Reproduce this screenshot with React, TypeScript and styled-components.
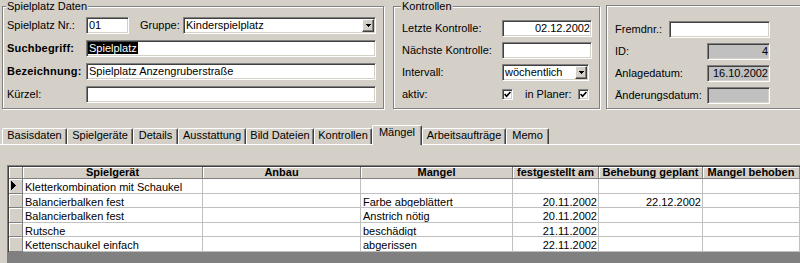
import React from 'react';
import styled, { createGlobalStyle, css } from 'styled-components';

const GlobalStyle = createGlobalStyle`
  html, body { margin: 0; padding: 0; background: #d4d0c8; }
  body {
    font-family: "Liberation Sans", Arial, sans-serif;
    font-size: 11px;
    color: #000;
  }
`;

const Screen = styled.div`
  width: 800px;
  height: 263px;
  overflow: hidden;
  background: #d4d0c8;
  display: flex;
  flex-direction: column;
`;

const TopArea = styled.div`
  display: flex;
  align-items: flex-start;
  padding-left: 2px;
  height: 110px;
  flex: none;
`;

const Group = styled.fieldset<{
  $width: number;
  $gapLeft?: number;
  $padTop: number;
  $padLeft: number;
  $padRight: number;
  $plain?: boolean;
}>`
  box-sizing: border-box;
  flex: none;
  min-width: 0;
  width: ${(p) => p.$width}px;
  height: ${(p) => (p.$plain ? 104 : 109)}px;
  margin: ${(p) => (p.$plain ? 5 : 0)}px 0 0 ${(p) => p.$gapLeft ?? 0}px;
  padding: ${(p) => p.$padTop}px ${(p) => p.$padRight}px 0 ${(p) => p.$padLeft}px;
  border: 1px solid #808080;
  box-shadow: inset 1px 1px 0 #fff, 1px 1px 0 #fff;
`;

const Legend = styled.legend`
  font-size: 11px;
  line-height: 13px;
  padding: 0 1px;
  margin-left: -1px;
  background: #d4d0c8;
`;

const FieldStack = styled.div<{ $gap: number }>`
  display: flex;
  flex-direction: column;
  gap: ${(p) => p.$gap}px;
`;

const FieldRow = styled.div`
  display: flex;
  align-items: center;
  height: 17px;
`;

const Label = styled.span<{ $width?: number; $bold?: boolean; $gapLeft?: number }>`
  flex: none;
  width: ${(p) => (p.$width ? `${p.$width}px` : 'auto')};
  margin-left: ${(p) => p.$gapLeft ?? 0}px;
  line-height: 17px;
  font-weight: ${(p) => (p.$bold ? 700 : 400)};
  letter-spacing: ${(p) => (p.$bold ? '0.2px' : '0')};
  white-space: nowrap;
`;

const sunken = css`
  box-sizing: border-box;
  border: 1px solid;
  border-color: #808080 #fff #fff #808080;
  box-shadow: inset 1px 1px 0 #404040, inset -1px -1px 0 #d4d0c8;
`;

const TextBox = styled.div<{ $width?: number; $align?: 'left' | 'right'; $readOnly?: boolean }>`
  ${sunken}
  flex: ${(p) => (p.$width ? 'none' : '1')};
  width: ${(p) => (p.$width ? `${p.$width}px` : 'auto')};
  height: 17px;
  padding: 1px 1px 1px 2px;
  line-height: 13px;
  text-align: ${(p) => p.$align ?? 'left'};
  background: ${(p) => (p.$readOnly ? '#c0c0c0' : '#fff')};
  white-space: nowrap;
  overflow: hidden;
`;

const Selected = styled.span`
  background: #000;
  color: #fff;
  margin-left: -1px;
  padding: 0 1px;
`;

const ComboBox = styled.div<{ $width: number; $gapLeft?: string }>`
  ${sunken}
  flex: none;
  display: flex;
  width: ${(p) => p.$width}px;
  margin-left: ${(p) => p.$gapLeft ?? '0'};
  height: 17px;
  padding: 1px;
  background: #fff;
`;

const ComboText = styled.span`
  flex: 1;
  padding-left: 1px;
  line-height: 13px;
  white-space: nowrap;
  overflow: hidden;
`;

const DropButton = styled.span`
  flex: none;
  box-sizing: border-box;
  width: 12px;
  height: 13px;
  background: #d4d0c8;
  border: 1px solid;
  border-color: #fff #404040 #404040 #fff;
  box-shadow: inset -1px -1px 0 #808080;
  display: flex;
  align-items: center;
  justify-content: center;
`;

const CheckBox = styled.span`
  ${sunken}
  flex: none;
  width: 11px;
  height: 11px;
  background: #fff;
  display: flex;
  align-items: center;
  justify-content: center;
`;

const TabStrip = styled.div`
  display: flex;
  align-items: flex-end;
  height: 19px;
  margin-top: 15px;
  padding-left: 2px;
  flex: none;
`;

const Tab = styled.div<{ $width: number; $active?: boolean }>`
  box-sizing: border-box;
  flex: none;
  position: relative;
  z-index: ${(p) => (p.$active ? 2 : 1)};
  width: ${(p) => p.$width}px;
  height: ${(p) => (p.$active ? 20 : 16)}px;
  margin-bottom: ${(p) => (p.$active ? -1 : 0)}px;
  border: 1px solid;
  border-bottom: none;
  border-color: #fff #404040 transparent #fff;
  border-radius: 2px 2px 0 0;
  box-shadow: inset -1px 0 0 #808080;
  background: #d4d0c8;
  line-height: 13px;
  text-align: center;
  white-space: nowrap;
`;

const TabPanel = styled.div`
  flex: 1;
  display: flex;
  flex-direction: column;
  border-top: 1px solid #fff;
  padding: 20px 0 0 7px;
  min-height: 0;
`;

const SheetFrame = styled.div`
  flex: 1;
  background: #808080;
  padding: 1px 0 0 1px;
`;

const Sheet = styled.div<{ $columns: string }>`
  display: grid;
  grid-template-columns: ${(p) => p.$columns};
  grid-template-rows: 12px;
  grid-auto-rows: 14.6px;
  border-top: 1px solid #404040;
  border-left: 1px solid #404040;
  width: max-content;
`;

const HeaderCell = styled.div`
  box-sizing: border-box;
  background: #d4d0c8;
  border-right: 1px solid #808080;
  border-bottom: 1px solid #808080;
  box-shadow: inset 1px 1px 0 #fff;
  font-weight: 700;
  line-height: 11px;
  text-align: center;
  white-space: nowrap;
  overflow: hidden;
`;

const SelectorCell = styled.div`
  box-sizing: border-box;
  background: #d4d0c8;
  border-right: 1px solid #808080;
  border-bottom: 1px solid #808080;
  box-shadow: inset 1px 1px 0 #fff;
  display: flex;
  align-items: center;
  padding-left: 2px;
`;

const Cell = styled.div<{ $align?: 'left' | 'right' }>`
  box-sizing: border-box;
  background: #fff;
  border-right: 1px solid #c0c0c0;
  border-bottom: 1px solid #c0c0c0;
  padding: 2px 1px 0 2px;
  line-height: 12px;
  text-align: ${(p) => p.$align ?? 'left'};
  white-space: nowrap;
  overflow: hidden;
`;

const DropArrow = () => (
  <svg width="5" height="3" viewBox="0 0 5 3" shapeRendering="crispEdges">
    <polygon points="0,0 5,0 2.5,3" fill="#000" />
  </svg>
);

const CheckMark = () => (
  <svg width="7" height="7" viewBox="0 0 7 7">
    <polyline points="0.6,3 2.6,5.2 6.4,1" fill="none" stroke="#000" strokeWidth="1.7" />
  </svg>
);

const RecordArrow = () => (
  <svg width="5" height="9" viewBox="0 0 5 9" shapeRendering="crispEdges">
    <polygon points="0,0 5,4.5 0,9" fill="#000" />
  </svg>
);

const tabs = [
  { label: 'Basisdaten', width: 65 },
  { label: 'Spielgeräte', width: 66 },
  { label: 'Details', width: 45 },
  { label: 'Ausstattung', width: 68 },
  { label: 'Bild Dateien', width: 68 },
  { label: 'Kontrollen', width: 58 },
  { label: 'Mängel', width: 50, active: true },
  { label: 'Arbeitsaufträge', width: 84 },
  { label: 'Memo', width: 43 },
];

type Align = 'left' | 'right';
const columns: { title: string; width: number; align?: Align }[] = [
  { title: 'Spielgerät', width: 180 },
  { title: 'Anbau', width: 158 },
  { title: 'Mangel', width: 152 },
  { title: 'festgestellt am', width: 86, align: 'right' },
  { title: 'Behebung geplant', width: 104, align: 'right' },
  { title: 'Mangel behoben', width: 97 },
];

const rows: string[][] = [
  ['Kletterkombination mit Schaukel', '', '', '', '', ''],
  ['Balancierbalken fest', '', 'Farbe abgeblättert', '20.11.2002', '22.12.2002', ''],
  ['Balancierbalken fest', '', 'Anstrich nötig', '20.11.2002', '', ''],
  ['Rutsche', '', 'beschädigt', '21.11.2002', '', ''],
  ['Kettenschaukel einfach', '', 'abgerissen', '22.11.2002', '', ''],
];

const gridColumns = ['14px', ...columns.map((c) => `${c.width}px`)].join(' ');

export default function App() {
  return (
    <>
      <GlobalStyle />
      <Screen>
        <TopArea>
          <Group $width={382} $padTop={4} $padLeft={4} $padRight={7}>
            <Legend>Spielplatz Daten</Legend>
            <FieldStack $gap={6}>
              <FieldRow>
                <Label $width={79}>Spielplatz Nr.:</Label>
                <TextBox $width={43}>01</TextBox>
                <Label $gapLeft={11}>Gruppe:</Label>
                <ComboBox $width={193} $gapLeft="auto">
                  <ComboText>Kinderspielplatz</ComboText>
                  <DropButton>
                    <DropArrow />
                  </DropButton>
                </ComboBox>
              </FieldRow>
              <FieldRow>
                <Label $width={79} $bold>
                  Suchbegriff:
                </Label>
                <TextBox>
                  <Selected>Spielplatz</Selected>
                </TextBox>
              </FieldRow>
              <FieldRow>
                <Label $width={79} $bold>
                  Bezeichnung:
                </Label>
                <TextBox>Spielplatz Anzengruberstraße</TextBox>
              </FieldRow>
              <FieldRow>
                <Label $width={79}>Kürzel:</Label>
                <TextBox />
              </FieldRow>
            </FieldStack>
          </Group>

          <Group $width={207} $gapLeft={9} $padTop={7} $padLeft={8} $padRight={7}>
            <Legend>Kontrollen</Legend>
            <FieldStack $gap={5}>
              <FieldRow>
                <Label $width={100}>Letzte Kontrolle:</Label>
                <TextBox $width={90} $align="right">
                  02.12.2002
                </TextBox>
              </FieldRow>
              <FieldRow>
                <Label $width={100}>Nächste Kontrolle:</Label>
                <TextBox $width={90} />
              </FieldRow>
              <FieldRow>
                <Label $width={100}>Intervall:</Label>
                <ComboBox $width={87}>
                  <ComboText>wöchentlich</ComboText>
                  <DropButton>
                    <DropArrow />
                  </DropButton>
                </ComboBox>
              </FieldRow>
              <FieldRow>
                <Label $width={100}>aktiv:</Label>
                <CheckBox>
                  <CheckMark />
                </CheckBox>
                <Label $width={53} $gapLeft={12}>
                  in Planer:
                </Label>
                <CheckBox>
                  <CheckMark />
                </CheckBox>
              </FieldRow>
            </FieldStack>
          </Group>

          <Group $width={200} $gapLeft={6} $padTop={15} $padLeft={8} $padRight={0} $plain>
            <FieldStack $gap={5}>
              <FieldRow>
                <Label $width={54}>Fremdnr.:</Label>
                <TextBox $width={101} />
              </FieldRow>
              <FieldRow>
                <Label $width={92}>ID:</Label>
                <TextBox $width={63} $align="right" $readOnly>
                  4
                </TextBox>
              </FieldRow>
              <FieldRow>
                <Label $width={92}>Anlagedatum:</Label>
                <TextBox $width={63} $align="right" $readOnly>
                  16.10.2002
                </TextBox>
              </FieldRow>
              <FieldRow>
                <Label $width={92}>Änderungsdatum:</Label>
                <TextBox $width={63} $readOnly />
              </FieldRow>
            </FieldStack>
          </Group>
        </TopArea>

        <TabStrip>
          {tabs.map((t) => (
            <Tab key={t.label} $width={t.width} $active={t.active}>
              {t.label}
            </Tab>
          ))}
        </TabStrip>

        <TabPanel>
          <SheetFrame>
            <Sheet $columns={gridColumns}>
              <SelectorCell />
              {columns.map((c) => (
                <HeaderCell key={c.title}>{c.title}</HeaderCell>
              ))}
              {rows.map((r, ri) => (
                <React.Fragment key={ri}>
                  <SelectorCell>{ri === 0 && <RecordArrow />}</SelectorCell>
                  {r.map((v, ci) => (
                    <Cell key={ci} $align={columns[ci].align}>
                      {v}
                    </Cell>
                  ))}
                </React.Fragment>
              ))}
            </Sheet>
          </SheetFrame>
        </TabPanel>
      </Screen>
    </>
  );
}
